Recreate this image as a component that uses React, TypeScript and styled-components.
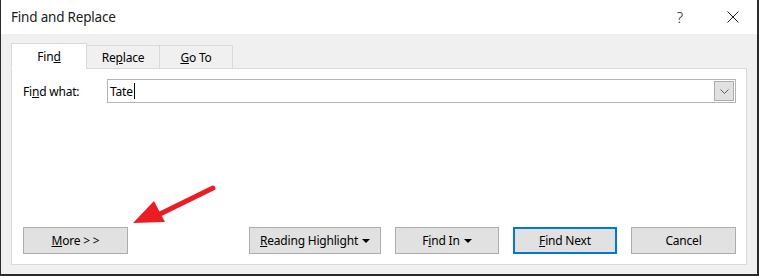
import React from "react";
import styled, { createGlobalStyle } from "styled-components";

const GlobalStyle = createGlobalStyle`
  html, body {
    margin: 0;
    padding: 0;
    background: #f0f0f0;
  }
  * {
    box-sizing: border-box;
  }
`;

const Key = ({ children }: { children: React.ReactNode }) => <u>{children}</u>;

const App = () => {
  return (
    <>
      <GlobalStyle />
      <StyledWindow>
        <StyledTitleBar>
          <StyledTitle>Find and Replace</StyledTitle>
          <StyledTitleActions>
            <StyledHelp>?</StyledHelp>
            <svg width="12" height="12" viewBox="0 0 12 12">
              <path d="M0.5 0.5 L11.5 11.5 M11.5 0.5 L0.5 11.5" stroke="#1a1a1a" strokeWidth="1" />
            </svg>
          </StyledTitleActions>
        </StyledTitleBar>

        <StyledBody>
          <StyledTabs>
            <StyledTab active>
              Fin<Key>d</Key>
            </StyledTab>
            <StyledTab>
              Re<Key>p</Key>lace
            </StyledTab>
            <StyledTab>
              <Key>G</Key>o To
            </StyledTab>
          </StyledTabs>

          <StyledPanel>
            <StyledFieldRow>
              <StyledLabel>
                Fi<Key>n</Key>d what:
              </StyledLabel>
              <StyledCombo>
                <StyledInputText>
                  Tate<StyledCaret />
                </StyledInputText>
                <StyledDropButton>
                  <svg width="9" height="5" viewBox="0 0 9 5">
                    <path d="M0.5 0.5 L4.5 4.5 L8.5 0.5" fill="none" stroke="#5a5a5a" strokeWidth="1" />
                  </svg>
                </StyledDropButton>
              </StyledCombo>
            </StyledFieldRow>

            <StyledButtonRow>
              <StyledButton width={105}>
                <span>
                  <Key>M</Key>ore &gt; &gt;
                </span>
              </StyledButton>
              <StyledButtonGroup>
                <StyledButton width={132}>
                  <span>
                    <Key>R</Key>eading Highlight
                  </span>
                  <StyledDropTriangle />
                </StyledButton>
                <StyledButton width={104}>
                  <span>
                    F<Key>i</Key>nd In
                  </span>
                  <StyledDropTriangle />
                </StyledButton>
                <StyledButton width={104} primary>
                  <span>
                    <Key>F</Key>ind Next
                  </span>
                </StyledButton>
                <StyledButton width={105}>
                  <span>Cancel</span>
                </StyledButton>
              </StyledButtonGroup>
            </StyledButtonRow>
          </StyledPanel>

          <StyledArrow width="90" height="50" viewBox="0 0 90 50">
            <line x1="81" y1="4" x2="28" y2="30" stroke="#ec1c24" strokeWidth="5" strokeLinecap="round" />
            <polygon points="1,39 22,17 33,38" fill="#ec1c24" />
          </StyledArrow>
        </StyledBody>
      </StyledWindow>
    </>
  );
};

const StyledWindow = styled.div`
  position: relative;
  width: 759px;
  height: 276px;
  display: flex;
  flex-direction: column;
  background: #f0f0f0;
  border-left: 1px solid #2a2a2a;
  border-right: 2px solid #2a2a2a;
  border-bottom: 2px solid #2a2a2a;
  font-family: "Noto Sans", "Open Sans", sans-serif;
  font-size: 12px;
  letter-spacing: -0.2px;
  color: #000;
`;

const StyledTitleBar = styled.div`
  height: 34px;
  flex: none;
  display: flex;
  align-items: center;
  justify-content: space-between;
  padding: 0 18px 0 10px;
  background: #fff;
`;

const StyledTitle = styled.div`
  font-size: 13.5px;
  color: #1a1a1a;
  padding-bottom: 1px;
`;

const StyledTitleActions = styled.div`
  display: flex;
  align-items: center;
  gap: 44px;
`;

const StyledHelp = styled.span`
  font-size: 15px;
  color: #1a1a1a;
  font-weight: 300;
`;

const StyledBody = styled.div`
  position: relative;
  flex: 1;
  display: flex;
  flex-direction: column;
  padding: 9px 10px 9px 10px;
`;

const StyledTabs = styled.div`
  display: flex;
  align-items: flex-end;
  height: 26px;
  margin-bottom: -1px;
  position: relative;
  z-index: 1;
`;

const StyledTab = styled.div<{ active?: boolean }>`
  height: ${(p) => (p.active ? "26px" : "24px")};
  width: ${(p) => (p.active ? "76px" : "74px")};
  display: flex;
  align-items: center;
  justify-content: center;
  background: ${(p) => (p.active ? "#fff" : "#f0f0f0")};
  border: 1px solid #d9d9d9;
  border-bottom: ${(p) => (p.active ? "1px solid #fff" : "1px solid #d9d9d9")};
  margin-left: ${(p) => (p.active ? "0" : "-1px")};
  padding-top: ${(p) => (p.active ? "0" : "1px")};
`;

const StyledPanel = styled.div`
  flex: 1;
  display: flex;
  flex-direction: column;
  justify-content: space-between;
  background: #fff;
  border: 1px solid #d9d9d9;
  padding: 10px 10px 10px 11px;
`;

const StyledFieldRow = styled.div`
  display: flex;
  align-items: center;
`;

const StyledLabel = styled.div`
  width: 84px;
`;

const StyledCombo = styled.div`
  flex: 1;
  height: 24px;
  display: flex;
  border: 1px solid #b4b4b4;
  background: #fff;
`;

const StyledInputText = styled.div`
  flex: 1;
  display: flex;
  align-items: center;
  padding-left: 2px;
`;

const StyledCaret = styled.span`
  display: inline-block;
  width: 1px;
  height: 16px;
  background: #000;
  margin-left: 1px;
`;

const StyledDropButton = styled.div`
  width: 20px;
  margin: 1px;
  display: flex;
  align-items: center;
  justify-content: center;
  background: #e1e1e1;
  border: 1px solid #adadad;
`;

const StyledButtonRow = styled.div`
  display: flex;
  justify-content: space-between;
  align-items: center;
`;

const StyledButtonGroup = styled.div`
  display: flex;
  gap: 14px;
`;

const StyledButton = styled.div<{ width: number; primary?: boolean }>`
  width: ${(p) => p.width}px;
  height: 27px;
  display: flex;
  align-items: center;
  justify-content: center;
  gap: 4px;
  background: #e1e1e1;
  border: ${(p) => (p.primary ? "2px solid #0078d7" : "1px solid #adadad")};
`;

const StyledDropTriangle = styled.span`
  width: 0;
  height: 0;
  border-left: 4px solid transparent;
  border-right: 4px solid transparent;
  border-top: 4px solid #000;
`;

const StyledArrow = styled.svg`
  position: absolute;
  left: 131px;
  top: 150px;
`;

export default App;
